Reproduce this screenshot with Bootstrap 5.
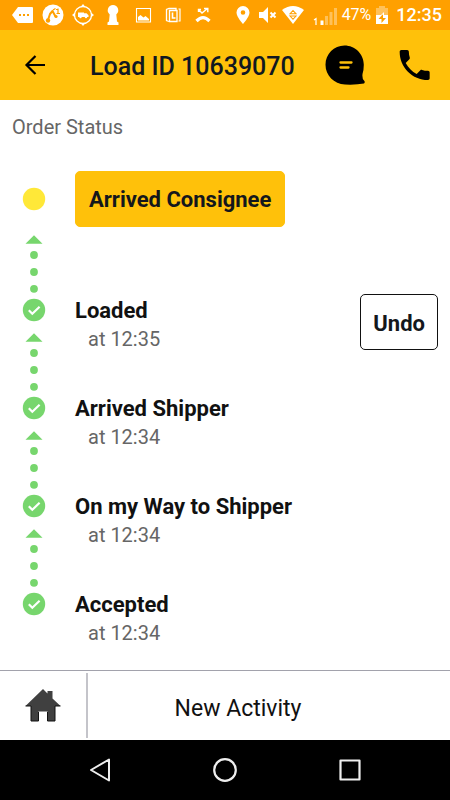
<!DOCTYPE html>
<html lang="en">
<head>
<meta charset="utf-8">
<meta name="viewport" content="width=device-width, initial-scale=1">
<title>Load ID 10639070</title>
<link href="https://cdn.jsdelivr.net/npm/bootstrap@5.3.0/dist/css/bootstrap.min.css" rel="stylesheet">
<style>
  body { font-family: Roboto, "Liberation Sans", sans-serif; color: #111; background: #fff; }
  svg { display: block; flex: none; }
  .device-bar { height: 30px; background: #ffa000; color: #fff; padding: 0 8px 0 12px; }
  .device-icons { gap: 8px; }
  .signal-icons { gap: 5px; font-size: 16px; line-height: 30px; }
  .clock { font-size: 18px; font-weight: 500; padding-left: 3px; }
  .app-bar { height: 70px; background: #ffc10a; padding: 0 16px 0 20px; }
  .app-bar h1 { font-size: 25px; line-height: 32px; font-weight: 500; color: #111820; padding-top: 4px; }
  .plain-btn { background: none; border: 0; padding: 0; color: #000; }
  .load-title { padding-left: 40px; }
  .actions { gap: 33px; }
  .status-area { padding: 12px 12px 0; }
  .status-area h2 { font-size: 20px; line-height: 30px; font-weight: 400; color: #666; margin-bottom: 29px; }
  .step { min-height: 98px; }
  .step-current { min-height: 123px; }
  .rail { width: 44px; }
  .marker { height: 32px; }
  .step-current .marker { height: 56px; }
  .step-body { padding-left: 19px; }
  .step-title { font-size: 22px; line-height: 34px; font-weight: 700; margin: 0; }
  .step-time { font-size: 20px; line-height: 22px; color: #666; padding-left: 13px; margin: 0; }
  .step-btn { height: 56px; padding: 4px 12px 0; font-size: 22px; line-height: 32px; font-weight: 700; border-radius: 5px; color: #14171c; }
  .step-btn-main { background: #ffc10a; border: 1px solid #ffc10a; padding: 2px 13px 0; }
  .step-btn-undo { background: #fff; border: 1px solid #111; }
  .bottom-tabs { height: 70px; border-top: 1px solid #a2a2ac; }
  .home-tab { width: 88px; margin: 2px 0; border-right: 2px solid #c4c4ca; }
  .new-tab { font-size: 23px; padding-right: 62px; padding-top: 8px; color: #111; }
  .system-nav { height: 60px; background: #000; padding: 0 38px; }
</style>
<script src="https://cdn.jsdelivr.net/npm/bootstrap@5.3.0/dist/js/bootstrap.bundle.min.js"></script>
</head>
<body>
<svg width="0" height="0" class="d-none" aria-hidden="true">
  <symbol id="done" viewBox="0 0 24 24">
    <circle cx="12" cy="12" r="11.2" fill="#77d66d"/>
    <path d="M6.8 12.3 10.3 15.8 17.6 8.8" fill="none" stroke="#fff" stroke-width="2.2"/>
  </symbol>
  <symbol id="link" viewBox="0 0 24 60">
    <g fill="#77d66d"><path d="M12 1.200 20.500 9.700H3.500Z"/><circle cx="12" cy="21" r="3.900"/><circle cx="12" cy="38" r="3.900"/><circle cx="12" cy="54.800" r="3.900"/></g>
  </symbol>
</svg>
<div class="d-flex flex-column min-vh-100">
  <div class="device-bar d-flex align-items-center justify-content-between">
    <div class="device-icons d-flex align-items-center">
      <svg width="22" height="22" viewBox="0 0 22 22"><path d="M6 3H20Q21 3 21 4V18Q21 19 20 19H6L0 11Z" fill="#fff"/><path d="M7 10h2v2H7zM11 10h2v2h-2zM15 10h2v2h-2z" fill="#ffa000"/></svg>
      <svg width="22" height="22" viewBox="0 0 22 22"><circle cx="11" cy="11" r="10.500" fill="#fff"/><path d="M6 16 8 10 10.500 7 13.500 12.500" fill="none" stroke="#ffa000" stroke-width="2" stroke-linejoin="round"/><path d="m11 6 2.500-1.500M16 4.500v5M14 5.500h2M14.500 9.500H18" fill="none" stroke="#ffa000" stroke-width="1.200"/><circle cx="6" cy="16.500" r="2.200" fill="#ffa000"/><circle cx="14" cy="12.500" r="1.600" fill="#ffa000"/></svg>
      <svg width="22" height="22" viewBox="0 0 22 22"><circle cx="11" cy="11" r="8.500" fill="none" stroke="#fff" stroke-width="1.300"/><path d="M8.500 3 11 0l2.500 3zM8.500 19 11 22l2.500-3zM3 8.500 0 11l3 2.500zM19 8.500 22 11l-3 2.500zM6 8.500h6v.8h2.500l2 2v1.700H6z" fill="#fff"/><circle cx="8.500" cy="13" r="1.200" fill="#fff"/><circle cx="14" cy="13" r="1.200" fill="#fff"/></svg>
      <svg width="22" height="22" viewBox="0 0 22 22"><path d="M11 1a5.300 5.300 0 0 1 3.300 9.400L15 17.500l1.500 1V21h-11v-2.500l1.500-1 .7-7.100A5.300 5.300 0 0 1 11 1z" fill="#fff"/></svg>
      <svg width="22" height="22" viewBox="0 0 22 22"><path d="M4.500 4.500h14v13.500h-14z" fill="none" stroke="#fff" stroke-width="1.100"/><path d="M6 16.500V13l2.500-2 3 2.500 2-1.500 3.500 3v1.500z" fill="#fff"/></svg>
      <svg width="22" height="22" viewBox="0 0 22 22" fill="none" stroke="#fff"><path d="M7 17.500 4.500 16.500V5.500L7 4.500H14V6" stroke-width="1.300"/><path d="M7.500 6.500H15v11H7.500z" stroke-width="1.300"/><path d="M10.500 8.500V14h3" stroke-width="1.600"/><path d="M16.500 5h1.500v12h-1.500" stroke-width="1.200"/></svg>
      <svg width="22" height="22" viewBox="0 0 22 22"><path d="M4.500 17Q11 10.500 17.500 17" fill="none" stroke="#fff" stroke-width="3.200"/><path d="M6.500 5.500 10 9l5.500-4.500M12 4.500h3.800v3.800M6.500 8V5.500H9" fill="none" stroke="#fff" stroke-width="1.400"/></svg>
    </div>
    <div class="signal-icons d-flex align-items-center">
      <svg width="14" height="20" viewBox="0 0 14 20"><path fill-rule="evenodd" d="M7 1a6.500 6.500 0 0 1 6.500 6.500C13.500 12 7 19 7 19S.5 12 .5 7.500A6.500 6.500 0 0 1 7 1zm0 4.200a2.300 2.300 0 1 0 0 4.600 2.300 2.300 0 0 0 0-4.600z" fill="#fff"/></svg>
      <svg class="ms-1" width="18" height="18" viewBox="0 0 18 18"><path d="M0 6h4l5-5v16l-5-5H0z" fill="#fff"/><path d="m11.500 6.500 5 5m0-5-5 5" stroke="#fff" stroke-width="2"/></svg>
      <svg width="22" height="20" viewBox="0 0 22 20"><path d="M0 5Q11-3 22 5L11 19Z" fill="#fff"/><path d="M8 8.800 11 5.500l3 3.300zM8 11l3 3.300 3-3.300z" fill="none" stroke="#ffa000" stroke-width="1.100"/></svg>
      <svg class="ms-1" width="24" height="22" viewBox="1 0 24 22"><path d="m2 16 2-1.300V21" fill="none" stroke="#fff" stroke-width="1.200"/><path d="M8.500 16.500h3V21h-3z" fill="#fff"/><path d="M13 12h3v9h-3zM17.500 8h3v13h-3zM22 4h3v17h-3z" fill="#fff" opacity=".35"/></svg>
      <span>47%</span>
      <svg width="12" height="20" viewBox="0 0 12 20"><path d="M0 3h3V1h6v2h3v7H0z" fill="#fff" opacity=".35"/><path fill-rule="evenodd" d="M0 10h5l3-3v3h4v9H0zm7-1-4.500 5H5.500v4L10 13H7z" fill="#fff"/></svg>
      <span class="clock">12:35</span>
    </div>
  </div>

  <header class="app-bar d-flex align-items-center">
    <button class="plain-btn" type="button" aria-label="Back">
      <svg width="30" height="30" viewBox="0 0 30 30"><path d="M15.500 6 6.500 15l9 9M6.500 15H25" fill="none" stroke="currentColor" stroke-width="2.200"/></svg>
    </button>
    <h1 class="load-title flex-grow-1 mb-0 text-nowrap">Load ID 10639070</h1>
    <div class="actions d-flex align-items-center">
      <button class="plain-btn" type="button" aria-label="Messages">
        <svg width="40" height="40" viewBox="0 0 40 40"><path d="M19.500.5C9 .5.500 9 .500 19.800S9 39 20 39.500Q31 40 39 38.500 40.500 37 39 35.500 37 34 37.500 29 38.800 25 38.800 19.800C38.800 9 30 .5 19.500.5Z"/><path d="M15.500 17.500h11M15.500 22.500h8" stroke="#ffc10a" stroke-width="2.300" stroke-linecap="round"/></svg>
      </button>
      <button class="plain-btn" type="button" aria-label="Call">
        <svg width="36" height="40" viewBox="2 0 21.600 24"><path d="M6.620 10.790c1.440 2.830 3.760 5.140 6.590 6.590l2.200-2.200c.270-.270.670-.360 1.020-.240 1.120.370 2.330.570 3.570.570.550 0 1 .450 1 1V20c0 .550-.450 1-1 1-9.390 0-17-7.610-17-17 0-.550.450-1 1-1h3.500c.550 0 1 .450 1 1 0 1.250.2 2.450.570 3.570.110.350.030.740-.250 1.020z"/></svg>
      </button>
    </div>
  </header>

  <main class="status-area flex-grow-1">
    <h2>Order Status</h2>
    <ol class="list-unstyled mb-0">
      <li class="step step-current d-flex">
        <div class="rail d-flex flex-column align-items-center justify-content-between">
          <div class="marker d-flex align-items-center"><svg width="24" height="24"><circle cx="12" cy="12" r="11.200" fill="#ffe838"/></svg></div>
          <svg width="24" height="60"><use href="#link"/></svg>
        </div>
        <div class="step-body"><button class="step-btn step-btn-main" type="button">Arrived Consignee</button></div>
      </li>
      <li class="step d-flex">
        <div class="rail d-flex flex-column align-items-center justify-content-between">
          <div class="marker d-flex align-items-center"><svg width="24" height="24"><use href="#done"/></svg></div>
          <svg width="24" height="60"><use href="#link"/></svg>
        </div>
        <div class="step-body flex-grow-1"><h3 class="step-title">Loaded</h3><p class="step-time">at 12:35</p></div>
        <button class="step-btn step-btn-undo" type="button">Undo</button>
      </li>
      <li class="step d-flex">
        <div class="rail d-flex flex-column align-items-center justify-content-between">
          <div class="marker d-flex align-items-center"><svg width="24" height="24"><use href="#done"/></svg></div>
          <svg width="24" height="60"><use href="#link"/></svg>
        </div>
        <div class="step-body"><h3 class="step-title">Arrived Shipper</h3><p class="step-time">at 12:34</p></div>
      </li>
      <li class="step d-flex">
        <div class="rail d-flex flex-column align-items-center justify-content-between">
          <div class="marker d-flex align-items-center"><svg width="24" height="24"><use href="#done"/></svg></div>
          <svg width="24" height="60"><use href="#link"/></svg>
        </div>
        <div class="step-body"><h3 class="step-title">On my Way to Shipper</h3><p class="step-time">at 12:34</p></div>
      </li>
      <li class="d-flex">
        <div class="rail d-flex flex-column align-items-center">
          <div class="marker d-flex align-items-center"><svg width="24" height="24"><use href="#done"/></svg></div>
        </div>
        <div class="step-body"><h3 class="step-title">Accepted</h3><p class="step-time">at 12:34</p></div>
      </li>
    </ol>
  </main>

  <nav class="bottom-tabs d-flex" aria-label="Main">
    <a class="home-tab d-flex align-items-center justify-content-center" href="#" aria-label="Home">
      <svg width="36" height="36" viewBox="0 0 36 36"><path d="M18 1 22.500 5.500V3h5v7.500L35.500 18H30v15h-7.500v-9.500h-9V33H6V18H.5Z" fill="#404040"/><path d="M.5 18H6M30 18h5.500M6 18v15h7.500v-9M22.500 24v9H30V18" fill="none" stroke="#111"/></svg>
    </a>
    <a class="new-tab flex-grow-1 d-flex align-items-center justify-content-center text-decoration-none" href="#">New Activity</a>
  </nav>

  <div class="system-nav d-flex align-items-center justify-content-around">
    <button class="plain-btn" type="button" aria-label="System back"><svg width="26" height="26" viewBox="0 0 26 26"><path d="M22 2.500v21L4 13Z" fill="none" stroke="#eee" stroke-width="2" stroke-linejoin="round"/></svg></button>
    <button class="plain-btn" type="button" aria-label="System home"><svg width="26" height="26" viewBox="0 0 26 26"><circle cx="13" cy="13" r="10.800" fill="none" stroke="#eee" stroke-width="2.200"/></svg></button>
    <button class="plain-btn" type="button" aria-label="Recent apps"><svg width="26" height="26" viewBox="0 0 26 26"><path d="M3.500 3.500h19v19h-19z" fill="none" stroke="#eee" stroke-width="2.200" stroke-linejoin="round"/></svg></button>
  </div>
</div>
</body>
</html>
